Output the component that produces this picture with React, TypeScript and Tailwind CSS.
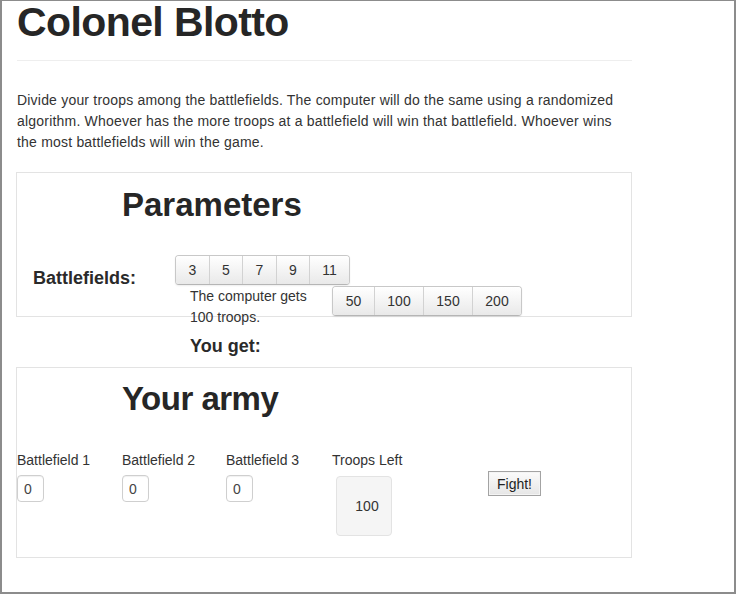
import React from "react";

type Choice = { label: string; width: string };

const fieldChoices: Choice[] = [
  { label: "3", width: "w-[33px]" },
  { label: "5", width: "w-[33px]" },
  { label: "7", width: "w-[34px]" },
  { label: "9", width: "w-[33px]" },
  { label: "11", width: "w-[40px]" },
];

const troopChoices: Choice[] = [
  { label: "50", width: "w-[41px]" },
  { label: "100", width: "w-[49px]" },
  { label: "150", width: "w-[49px]" },
  { label: "200", width: "w-[49px]" },
];

function ButtonGroup({ items }: { items: Choice[] }) {
  return (
    <div className="flex h-[30px] overflow-hidden rounded-[4px] border border-[#c8c8c8] border-b-[#b5b5b5] shadow-[0_1px_2px_rgba(0,0,0,0.07)]">
      {items.map((item, i) => (
        <button
          key={item.label}
          type="button"
          className={`${item.width} ${
            i > 0 ? "border-l border-[#d2d2d2]" : ""
          } flex items-center justify-center bg-linear-to-b from-white to-[#e9e9e9] text-[14px] leading-none text-[#333]`}
        >
          {item.label}
        </button>
      ))}
    </div>
  );
}

function FieldInput({ label, width }: { label: string; width: string }) {
  return (
    <div className={`${width} flex flex-col`}>
      <div className="text-[14px] leading-[20px] text-[#333]">{label}</div>
      <input
        type="text"
        defaultValue="0"
        className="mt-[5px] h-[27px] w-[27px] rounded-[4px] border border-[#cfcfcf] pl-[6px] text-[14px] text-[#444] shadow-[inset_0_1px_1px_rgba(0,0,0,0.06)] outline-none"
      />
    </div>
  );
}

export default function App() {
  return (
    <div className="h-[594px] w-[736px] overflow-hidden border-t border-r-2 border-b-2 border-l-2 border-[#8c8c8c] bg-white pl-[14px] font-['Liberation_Sans',Arial,sans-serif] text-[#333]">
      <div className="w-[616px]">
        <h1 className="pl-px text-[41px] leading-[42px] font-bold tracking-[-0.6px] text-[#262626]">
          Colonel Blotto
        </h1>
        <hr className="mt-[17px] ml-px border-0 border-t border-[#eeeeee]" />

        <p className="mt-[29px] pl-px text-[14px] leading-[21px] tracking-[0.2px]">
          Divide your troops among the battlefields. The computer will do the same using a randomized
          <br />
          algorithm. Whoever has the more troops at a battlefield will win that battlefield. Whoever wins
          <br />
          the most battlefields will win the game.
        </p>

        <section className="mt-[19px] h-[145px] border border-[#e3e3e3]">
          <h2 className="pt-[14px] pl-[105px] text-[33px] leading-[36px] font-bold text-[#262626]">
            Parameters
          </h2>
          <div className="mt-[32px] flex h-[30px] items-start">
            <div className="w-[158px] pt-[13px] pl-4 text-[18px] leading-[20px] font-bold text-[#2a2a2a]">
              Battlefields:
            </div>
            <ButtonGroup items={fieldChoices} />
          </div>
          <div className="mt-px flex items-start pl-[173px]">
            <div className="mr-[12px] w-[130px] text-[14px] leading-[21px]">
              The computer gets 100 troops.
            </div>
            <ButtonGroup items={troopChoices} />
          </div>
          <div className="mt-[8px] pl-[173px] text-[18px] leading-[20px] font-bold text-[#2a2a2a]">
            You get:
          </div>
        </section>

        <section className="mt-[50px] border border-[#e3e3e3] pb-[21px]">
          <h2 className="pt-[13px] pl-[105px] text-[33px] leading-[36px] font-bold tracking-[-0.5px] text-[#262626]">
            Your army
          </h2>
          <div className="mt-[33px] flex items-start">
            <FieldInput label="Battlefield 1" width="w-[105px]" />
            <FieldInput label="Battlefield 2" width="w-[104px]" />
            <FieldInput label="Battlefield 3" width="w-[106px]" />
            <div className="flex w-[156px] flex-col">
              <div className="text-[14px] leading-[20px]">Troops Left</div>
              <div className="mt-[6px] ml-1 flex h-[60px] w-[56px] items-center justify-center rounded-[4px] border border-[#e3e3e3] bg-[#f5f5f5] pl-[6px] text-[14px]">
                100
              </div>
            </div>
            <button
              type="button"
              className="mt-[21px] h-[25px] w-[53px] border border-[#a3a3a3] bg-linear-to-b from-[#fbfbfb] to-[#e6e6e6] text-[14px] leading-none text-[#222] shadow-[inset_0_0_0_1px_#f4f4f4]"
            >
              Fight!
            </button>
          </div>
        </section>
      </div>
    </div>
  );
}
